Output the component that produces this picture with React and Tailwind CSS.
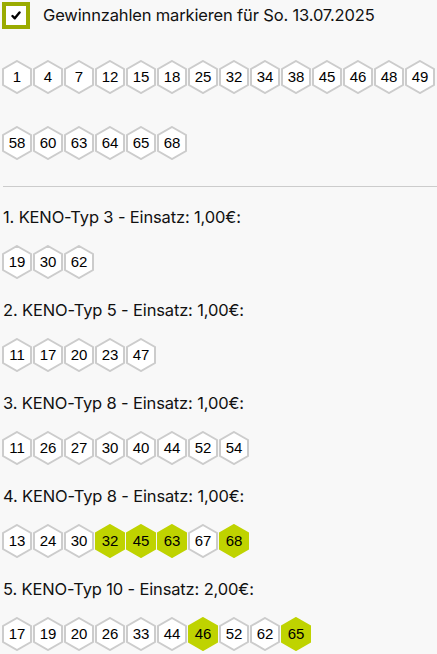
import React from "react";

const winning = [1, 4, 7, 12, 15, 18, 25, 32, 34, 38, 45, 46, 48, 49, 58, 60, 63, 64, 65, 68];

const tips = [
  { title: "1. KENO-Typ 3 - Einsatz: 1,00€:", nums: [19, 30, 62] },
  { title: "2. KENO-Typ 5 - Einsatz: 1,00€:", nums: [11, 17, 20, 23, 47] },
  { title: "3. KENO-Typ 8 - Einsatz: 1,00€:", nums: [11, 26, 27, 30, 40, 44, 52, 54] },
  { title: "4. KENO-Typ 8 - Einsatz: 1,00€:", nums: [13, 24, 30, 32, 45, 63, 67, 68] },
  { title: "5. KENO-Typ 10 - Einsatz: 2,00€:", nums: [17, 19, 20, 26, 33, 44, 46, 52, 62, 65] },
];

function Hex({ n, hit }) {
  return (
    <div className="relative w-[30px] h-[34px] flex items-center justify-center">
      <svg className="absolute inset-0" width="30" height="34" viewBox="0 0 30 34">
        <polygon
          points="15,1 29,9 29,25 15,33 1,25 1,9"
          fill={hit ? "#bfd300" : "#ffffff"}
          stroke={hit ? "#bfd300" : "#cccccc"}
          strokeWidth="2"
        />
      </svg>
      <span className="relative text-[15px] text-black font-['Liberation_Sans',Arial,sans-serif]">{n}</span>
    </div>
  );
}

export default function App() {
  return (
    <div className="min-h-screen bg-[#f8f8f8] pl-[2px] pt-[2px] font-['Inter',sans-serif] text-[#111]">
      {/* Header */}
      <div className="flex items-center gap-[13px] h-[27px]">
        <div className="w-[28px] h-[27px] border-[4px] border-[#9aab00] bg-white flex items-center justify-center">
          <svg width="10" height="9" viewBox="0 0 10 9">
            <path d="M1.5 5 L3.8 7.3 L8.5 1.5" fill="none" stroke="#000" strokeWidth="2.4" strokeLinecap="round" strokeLinejoin="round" />
          </svg>
        </div>
        <span className="text-[16.5px] tracking-[-0.15px]">Gewinnzahlen markieren für So. 13.07.2025</span>
      </div>

      {/* Winning numbers */}
      <div className="flex flex-wrap gap-x-[1px] gap-y-[32px] mt-[31px]">
        {winning.map((n) => (
          <Hex key={n} n={n} />
        ))}
      </div>

      <div className="h-[1px] bg-[#cccccc] mt-[26px] ml-[1px]" />

      {/* Tips */}
      <div className="mt-[18px]">
        {tips.map((t) => (
          <div key={t.title} className="mb-[19px]">
            <div className="text-[16.5px] leading-[24px] tracking-[-0.15px] pl-[1px]">{t.title}</div>
            <div className="flex flex-wrap gap-[1px] mt-[16px]">
              {t.nums.map((n) => (
                <Hex key={n} n={n} hit={winning.includes(n)} />
              ))}
            </div>
          </div>
        ))}
      </div>
    </div>
  );
}
